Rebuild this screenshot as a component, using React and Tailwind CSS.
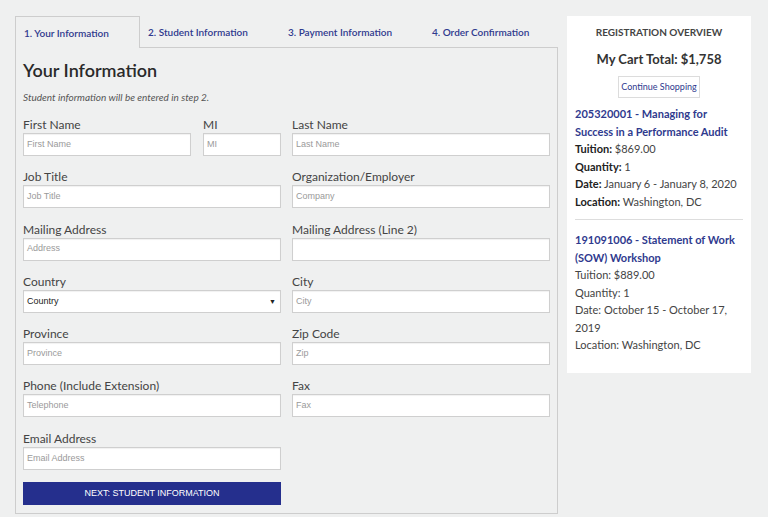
import React from "react";

const Field = ({ label, placeholder, className = "", select }) => (
  <div className={`flex flex-col ${className}`}>
    <label className="text-[12px] leading-[17px] text-[#444]">{label}</label>
    {select ? (
      <div className="flex h-[23px] items-center justify-between border border-[#cfcfcf] bg-white pl-[3px] pr-[4px] shadow-[inset_0_1px_1px_rgba(0,0,0,0.06)]">
        <span className="font-['Liberation_Sans',sans-serif] text-[9px] text-[#222]">{placeholder}</span>
        <span className="text-[7px] text-[#222]">▼</span>
      </div>
    ) : (
      <div className="flex h-[23px] items-center border border-[#cfcfcf] bg-white pl-[3px] shadow-[inset_0_1px_1px_rgba(0,0,0,0.06)]">
        <span className="font-['Liberation_Sans',sans-serif] text-[9px] text-[#9a9a9a]">{placeholder}</span>
      </div>
    )}
  </div>
);

const Row = ({ children }) => <div className="mb-[12.3px] grid grid-cols-2 gap-x-[11px]">{children}</div>;

export default function App() {
  return (
    <div className="min-h-[517px] w-[768px] bg-[#eff0f0] font-['Lato',sans-serif]">
      <div className="flex gap-[9px] pl-[15px] pt-[16px]">
        <div className="flex w-[543px] flex-col">
          {/* tabs */}
          <div className="flex h-[32px] text-[10px] font-semibold text-[#2f3a8e]">
            <div className="flex w-[125px] items-center border-l border-r border-t border-[#cdcdcd] pl-[8px] pt-[2px]">1. Your Information</div>
            <div className="flex w-[140px] items-center border-b border-[#cdcdcd] pl-[8px] pt-[1px]">2. Student Information</div>
            <div className="flex w-[144px] items-center border-b border-[#cdcdcd] pl-[8px] pt-[1px]">3. Payment Information</div>
            <div className="flex flex-1 items-center border-b border-[#cdcdcd] pl-[8px] pt-[1px]">4. Order Confirmation</div>
          </div>
          {/* panel */}
          <div className="border-b border-l border-r border-[#cdcdcd] px-[7px] pb-[8px] pt-[10px]">
            <h1 className="text-[18px] font-semibold leading-[24px] text-[#2a2a2a]">Your Information</h1>
            <p className="mb-[12px] mt-[8px] text-[10px] italic leading-[14px] text-[#555]">Student information will be entered in step 2.</p>
            <Row>
              <div className="flex gap-[12px]">
                <Field label="First Name" placeholder="First Name" className="w-[168px]" />
                <Field label="MI" placeholder="MI" className="flex-1" />
              </div>
              <Field label="Last Name" placeholder="Last Name" />
            </Row>
            <Row>
              <Field label="Job Title" placeholder="Job Title" />
              <Field label="Organization/Employer" placeholder="Company" />
            </Row>
            <Row>
              <Field label="Mailing Address" placeholder="Address" />
              <Field label="Mailing Address (Line 2)" placeholder="" />
            </Row>
            <Row>
              <Field label="Country" placeholder="Country" select />
              <Field label="City" placeholder="City" />
            </Row>
            <Row>
              <Field label="Province" placeholder="Province" />
              <Field label="Zip Code" placeholder="Zip" />
            </Row>
            <Row>
              <Field label="Phone (Include Extension)" placeholder="Telephone" />
              <Field label="Fax" placeholder="Fax" />
            </Row>
            <Row>
              <Field label="Email Address" placeholder="Email Address" />
              <div />
            </Row>
            <div className="grid grid-cols-2 gap-x-[11px]">
              <button className="flex h-[23px] items-center justify-center bg-[#252f8d] font-['Liberation_Sans',sans-serif] text-[9px] text-white">
                NEXT: STUDENT INFORMATION
              </button>
            </div>
          </div>
        </div>
        {/* sidebar */}
        <div className="h-[357px] w-[184px] bg-white px-[8px] pb-[19px] pt-[9px] text-[11px] text-[#444]">
          <div className="text-center text-[10px] font-bold leading-[14px] text-[#444]">REGISTRATION OVERVIEW</div>
          <div className="mt-[11px] text-center text-[13px] font-bold leading-[18px] text-[#333]">My Cart Total: $1,758</div>
          <div className="mt-[8px] flex justify-center">
            <div className="flex h-[22px] w-[82px] items-center justify-center border border-[#dcdcdc] text-[9px] text-[#2f3a8e]">
              Continue Shopping
            </div>
          </div>
          <div className="mt-[7px] leading-[17.5px]">
            <div className="font-bold text-[#2f3a8e]">205320001 - Managing for Success in a Performance Audit</div>
            <div><span className="font-bold text-[#222]">Tuition:</span> $869.00</div>
            <div><span className="font-bold text-[#222]">Quantity:</span> 1</div>
            <div><span className="font-bold text-[#222]">Date:</span> January 6 - January 8, 2020</div>
            <div><span className="font-bold text-[#222]">Location:</span> Washington, DC</div>
          </div>
          <div className="mb-[11px] mt-[9px] h-px bg-[#dddddd]" />
          <div className="leading-[17.5px]">
            <div className="font-bold text-[#2f3a8e]">191091006 - Statement of Work (SOW) Workshop</div>
            <div>Tuition: $889.00</div>
            <div>Quantity: 1</div>
            <div>Date: October 15 - October 17, 2019</div>
            <div>Location: Washington, DC</div>
          </div>
        </div>
      </div>
    </div>
  );
}
